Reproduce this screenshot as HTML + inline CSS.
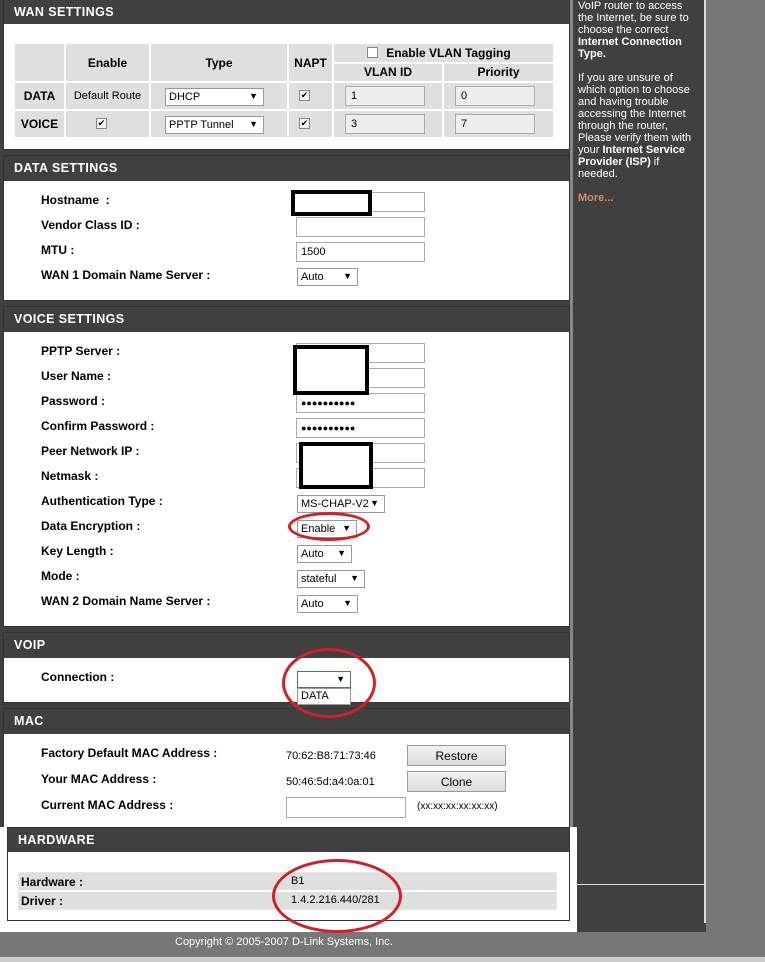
<!DOCTYPE html>
<html><head><meta charset="utf-8"><style>
*{box-sizing:border-box;margin:0;padding:0}
body{width:765px;height:962px;position:relative;overflow:hidden;background:#404040;font-family:"Liberation Sans",Tahoma,sans-serif;font-size:12px;color:#000}
.a{position:absolute}
.panel{position:absolute;left:3px;width:567px;background:#fff;border:1px solid #333}
.hd{position:absolute;left:0;right:0;top:0;height:25px;background:#404040;color:#fff;font-weight:bold;font-size:12.5px;padding:5px 0 0 10px;letter-spacing:.4px}
.lb{position:absolute;left:37px;font-weight:bold;font-size:12px}
.in{position:absolute;left:292px;width:129px;height:20px;border:1px solid #aaa;background:#fff;font-size:11px;padding:3px 4px}
.sel{position:absolute;height:18px;border:1px solid #999;background:#fff;font-size:11px;padding:2px 3px}
.sel:after{content:"▼";position:absolute;right:5px;top:2px;font-size:9px}
.cell{position:absolute;background:#dfdfdf;font-size:12px;text-align:center}
.cb{position:absolute;width:11px;height:11px;border:1px solid #888;background:#f4f4f4;font-size:9px;line-height:9px;text-align:center}
.vin{position:absolute;height:20px;background:#eee;border:1px solid #aaa;font-size:11px;padding:3px 5px;text-align:left}
.red{position:absolute;border:3px solid #d0212b;border-radius:50%;z-index:5}
.btn{position:absolute;left:407px;width:99px;height:21px;border:1px solid #999;background:linear-gradient(#f2f2f2,#dcdcdc);text-align:center;font-size:12px;padding-top:3px}
</style></head><body>
<!-- right gray -->
<div class="a" style="left:706px;top:0;width:59px;height:962px;background:#777"></div>
<div class="a" style="left:704px;top:0;width:2px;height:923px;background:#ddd"></div>
<div class="a" style="left:570px;top:0;width:3px;height:923px;background:#888"></div>
<div class="a" style="left:577px;top:884px;width:127px;height:1px;background:#ddd"></div>
<div class="a" style="left:0;top:932px;width:765px;height:30px;background:#777"></div>
<div class="a" style="left:0;top:957px;width:765px;height:5px;background:#ccc"></div>
<div class="a" style="left:175px;top:936px;color:#fff;font-size:11px">Copyright © 2005-2007 D-Link Systems, Inc.</div>

<!-- sidebar text -->
<div class="a" style="left:578px;top:0;width:118px;color:#fff;font-size:11px;line-height:12px">VoIP router to access the Internet, be sure to choose the correct <b>Internet Connection Type.</b><br><br>If you are unsure of which option to choose and having trouble accessing the Internet through the router, Please verify them with your <b>Internet Service Provider (ISP)</b> if needed.<br><br><b style="color:#d9895a">More...</b></div>

<!-- WAN -->
<div class="panel" style="top:-2px;height:152px">
<div class="hd" style="height:25px;padding-top:6px">WAN SETTINGS</div>
</div>
<div class="cell" style="left:15px;top:44px;width:49px;height:37px"></div>
<div class="cell" style="left:66px;top:44px;width:83px;height:37px;font-weight:bold;padding-top:12px">Enable</div>
<div class="cell" style="left:151px;top:44px;width:136px;height:37px;font-weight:bold;padding-top:12px">Type</div>
<div class="cell" style="left:289px;top:44px;width:43px;height:37px;font-weight:bold;padding-top:12px">NAPT</div>
<div class="cell" style="left:334px;top:44px;width:219px;height:18px;font-weight:bold;padding-top:2px;padding-left:10px">Enable VLAN Tagging</div>
<div class="cb" style="left:367px;top:47px;background:#fff"></div>
<div class="cell" style="left:334px;top:64px;width:108px;height:17px;font-weight:bold;padding-top:1px">VLAN ID</div>
<div class="cell" style="left:444px;top:64px;width:109px;height:17px;font-weight:bold;padding-top:1px">Priority</div>

<div class="cell" style="left:15px;top:83px;width:49px;height:26px;font-weight:bold;padding-top:6px">DATA</div>
<div class="cell" style="left:66px;top:83px;width:83px;height:26px;font-size:11px;padding-top:7px">Default Route</div>
<div class="cell" style="left:151px;top:83px;width:136px;height:26px"></div>
<div class="sel" style="left:165px;top:88px;width:99px">DHCP</div>
<div class="cell" style="left:289px;top:83px;width:43px;height:26px"></div><div class="cb" style="left:299px;top:90px">✔</div>
<div class="cell" style="left:334px;top:83px;width:108px;height:26px"></div><div class="vin" style="left:345px;top:86px;width:80px">1</div>
<div class="cell" style="left:444px;top:83px;width:109px;height:26px"></div><div class="vin" style="left:455px;top:86px;width:80px">0</div>

<div class="cell" style="left:15px;top:111px;width:49px;height:26px;font-weight:bold;padding-top:6px">VOICE</div>
<div class="cell" style="left:66px;top:111px;width:83px;height:26px"></div><div class="cb" style="left:96px;top:118px">✔</div>
<div class="cell" style="left:151px;top:111px;width:136px;height:26px"></div>
<div class="sel" style="left:165px;top:116px;width:99px">PPTP Tunnel</div>
<div class="cell" style="left:289px;top:111px;width:43px;height:26px"></div><div class="cb" style="left:299px;top:118px">✔</div>
<div class="cell" style="left:334px;top:111px;width:108px;height:26px"></div><div class="vin" style="left:345px;top:114px;width:80px">3</div>
<div class="cell" style="left:444px;top:111px;width:109px;height:26px"></div><div class="vin" style="left:455px;top:114px;width:80px">7</div>

<!-- DATA SETTINGS -->
<div class="panel" style="top:155px;height:146px"><div class="hd">DATA SETTINGS</div></div>
<div class="lb" style="top:193px;left:41px">Hostname &nbsp;:</div>
<div class="lb" style="top:218px;left:41px">Vendor Class ID :</div>
<div class="lb" style="top:243px;left:41px">MTU :</div>
<div class="lb" style="top:268px;left:41px">WAN 1 Domain Name Server :</div>
<div class="in" style="left:296px;top:192px"></div>
<div class="a" style="left:291px;top:190px;width:81px;height:26px;border:4px solid #000;background:#fff"></div>
<div class="in" style="left:296px;top:217px"></div>
<div class="in" style="left:296px;top:242px">1500</div>
<div class="sel" style="left:297px;top:268px;width:61px">Auto</div>

<!-- VOICE -->
<div class="panel" style="top:306px;height:321px"><div class="hd">VOICE SETTINGS</div></div>
<div class="lb" style="top:344px;left:41px">PPTP Server :</div>
<div class="lb" style="top:369px;left:41px">User Name :</div>
<div class="lb" style="top:394px;left:41px">Password :</div>
<div class="lb" style="top:419px;left:41px">Confirm Password :</div>
<div class="lb" style="top:444px;left:41px">Peer Network IP :</div>
<div class="lb" style="top:469px;left:41px">Netmask :</div>
<div class="lb" style="top:494px;left:41px">Authentication Type :</div>
<div class="lb" style="top:519px;left:41px">Data Encryption :</div>
<div class="lb" style="top:544px;left:41px">Key Length :</div>
<div class="lb" style="top:569px;left:41px">Mode :</div>
<div class="lb" style="top:594px;left:41px">WAN 2 Domain Name Server :</div>
<div class="in" style="left:296px;top:343px"></div>
<div class="in" style="left:296px;top:368px"></div>
<div class="in" style="left:296px;top:393px;font-size:9px;padding-top:4px">●●●●●●●●●●</div>
<div class="in" style="left:296px;top:418px;font-size:9px;padding-top:4px">●●●●●●●●●●</div>
<div class="in" style="left:296px;top:443px"></div>
<div class="in" style="left:296px;top:468px"></div>
<div class="a" style="left:293px;top:345px;width:76px;height:50px;border:4px solid #000;background:#fff"></div>
<div class="a" style="left:299px;top:442px;width:74px;height:47px;border:4px solid #000;background:#fff"></div>
<div class="sel" style="left:297px;top:495px;width:88px">MS-CHAP-V2</div>
<div class="sel" style="left:297px;top:520px;width:60px">Enable</div>
<div class="sel" style="left:297px;top:545px;width:55px">Auto</div>
<div class="sel" style="left:297px;top:570px;width:68px">stateful</div>
<div class="sel" style="left:297px;top:595px;width:61px">Auto</div>

<!-- VOIP -->
<div class="panel" style="top:632px;height:71px"><div class="hd">VOIP</div></div>
<div class="lb" style="top:670px;left:41px">Connection :</div>
<div class="sel" style="left:297px;top:671px;width:54px;height:17px;border-color:#4a6fa5"></div>

<!-- MAC -->
<div class="panel" style="top:708px;height:130px"><div class="hd">MAC</div></div>
<div class="a" style="left:297px;top:688px;width:54px;height:17px;border:1px solid #999;background:#fff;font-size:11px;padding:1px 3px;z-index:3">DATA</div>
<div class="lb" style="top:746px;left:41px">Factory Default MAC Address :</div>
<div class="lb" style="top:772px;left:41px">Your MAC Address :</div>
<div class="lb" style="top:798px;left:41px">Current MAC Address :</div>
<div class="a" style="left:286px;top:750px;font-size:11px">70:62:B8:71:73:46</div>
<div class="a" style="left:286px;top:776px;font-size:11px">50:46:5d:a4:0a:01</div>
<div class="btn" style="top:745px">Restore</div>
<div class="btn" style="top:771px">Clone</div>
<div class="in" style="left:286px;top:797px;width:120px;height:21px"></div>
<div class="a" style="left:417px;top:801px;font-size:10px">(xx:xx:xx:xx:xx:xx)</div>

<!-- HARDWARE -->
<div class="a" style="left:0;top:827px;width:577px;height:105px;background:#fff"></div>
<div class="a" style="left:7px;top:827px;width:563px;height:94px;border:1px solid #333;background:#fff"><div class="hd" style="height:24px">HARDWARE</div></div>
<div class="a" style="left:18px;top:872px;width:539px;height:38px;border:1px solid #e6e6e6"></div>
<div class="cell" style="left:19px;top:873px;width:537px;height:17px;text-align:left;font-weight:bold;padding:2px 2px">Hardware :</div>
<div class="cell" style="left:19px;top:892px;width:537px;height:17px;text-align:left;font-weight:bold;padding:2px 2px">Driver :</div>
<div class="a" style="left:291px;top:875px;font-size:11px">B1</div>
<div class="a" style="left:291px;top:894px;font-size:11px">1.4.2.216.440/281</div>

<div class="red" style="left:288px;top:512px;width:82px;height:29px"></div>
<div class="red" style="left:282px;top:648px;width:94px;height:70px"></div>
<div class="red" style="left:272px;top:859px;width:130px;height:74px"></div>
</body></html>
